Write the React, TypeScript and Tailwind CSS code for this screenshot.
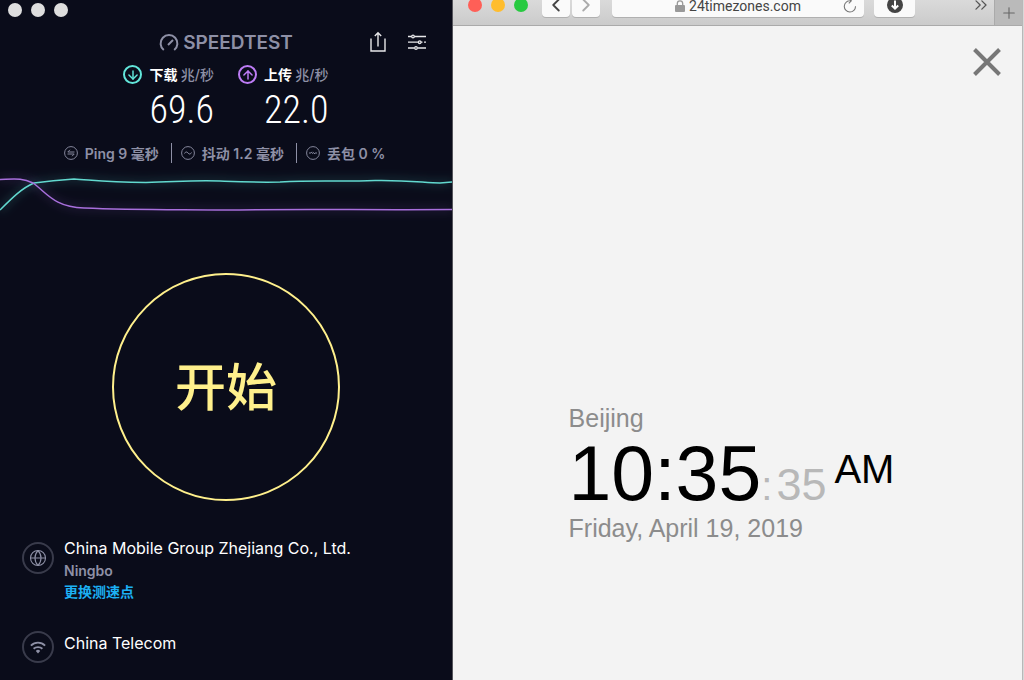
import { ArrowDown, ArrowUp, ChevronLeft, ChevronRight, ChevronsRight, Globe, Plus } from 'lucide-react'
import type { ReactNode } from 'react'

const latin = "font-['Inter','Noto_Sans_CJK_SC',sans-serif]"

function Gauge() {
  return (
    <svg viewBox="0 0 20 20" className="size-5" fill="none" stroke="#8e90a6" strokeWidth="2">
      <path d="M4.8 17A8.4 8.4 0 1 1 15.2 17" />
      <path d="M9 12l5-5" />
    </svg>
  )
}

function ShareIcon() {
  return (
    <svg viewBox="0 0 18 22" className="h-[22px] w-[18px]" fill="none" stroke="#e8e8ea" strokeWidth="1.4">
      <path d="M2 7.5V20h14V7.5M9 15.5V2M5.8 5L9 1.8 12.2 5" />
    </svg>
  )
}

function SlidersIcon() {
  return (
    <svg viewBox="0 0 20 18" className="h-[18px] w-5" fill="none" stroke="#e8e8ea" strokeWidth="1.3">
      <path d="M1 3.5h3.5M7.5 3.5H19M1 9.2h10M14 9.2h1.5M17 9.2h2M1 15h6.5M10.5 15H19" />
      <circle cx="6" cy="3.5" r="1.3" />
      <circle cx="12.7" cy="9.2" r="1.3" />
      <circle cx="9" cy="15" r="1.3" />
    </svg>
  )
}

function WifiIcon() {
  return (
    <svg viewBox="0 0 16 13" className="h-[13px] w-4" fill="none" stroke="#8e90a6" strokeWidth="1.9">
      <path d="M.9 4.6C5 .6 11 .6 15.1 4.6M3.6 7.8c2.5-2.3 6.3-2.3 8.8 0" />
      <path d="M5.8 9.9a3.2 3.2 0 0 1 4.4 0L8 12.5z" fill="#8e90a6" stroke="none" />
    </svg>
  )
}

function StatIcon({ d }: { d: string }) {
  return (
    <svg viewBox="0 0 14 14" className="size-3.5" fill="none" stroke="#85879c" strokeWidth="1">
      <circle cx="7" cy="7" r="6.4" />
      <path d={d} />
    </svg>
  )
}

function Speed({ label, value, icon, ring }: { label: string; value: string; icon: ReactNode; ring: string }) {
  return (
    <div className="flex gap-[7px]">
      <span className={`flex size-[19px] items-center justify-center rounded-full border-2 ${ring}`}>{icon}</span>
      <div>
        <div className="text-[14px] leading-5 font-bold whitespace-nowrap text-white">
          {label} <span className="font-medium text-[#8e90a6]">兆/秒</span>
        </div>
        <div className="font-['Roboto_Condensed','Liberation_Sans_Narrow',sans-serif] text-[38px] leading-[50px] font-light text-white">
          {value}
        </div>
      </div>
    </div>
  )
}

function Stat({ d, children }: { d: string; children: ReactNode }) {
  return (
    <li className="flex h-5 items-center gap-[7px] pr-3 pl-[9px] whitespace-nowrap">
      <StatIcon d={d} />
      {children}
    </li>
  )
}

function Graph() {
  const down = 'M0 45C12 33 22 23 34 18C48 16 58 15 74 14C92 15 104 17 146 17.5C176 17 190 15 220 16C245 17 255 17.5 280 17C320 15 340 17 375 15.5C410 15 425 18 440 18L452 17'
  const up = 'M0 14.5C16 14 22 13 33 18C47 28 54 42 84 43C130 45 170 44.5 226 45C280 44 380 45 452 44.5'
  return (
    <svg viewBox="0 0 452 60" preserveAspectRatio="none" className="block h-[60px] w-full" fill="none">
      <defs>
        <filter id="glow" x="-10%" y="-50%" width="120%" height="200%">
          <feGaussianBlur stdDeviation="4" />
        </filter>
      </defs>
      <path d={down} stroke="#5fe8dc" strokeOpacity=".14" strokeWidth="6" filter="url(#glow)" />
      <path d={up} stroke="#b477ee" strokeOpacity=".12" strokeWidth="6" filter="url(#glow)" />
      <path d={down} stroke="#62d9cf" strokeWidth="1.5" />
      <path d={up} stroke="#a86fdc" strokeWidth="1.5" />
    </svg>
  )
}

function SpeedtestWindow() {
  return (
    <section className={`flex flex-col border-r border-[#55555c] bg-[#0a0c1a] ${latin}`}>
      <div className="flex gap-[9px] px-2 pt-[3px]">
        <button aria-label="Close" className="size-3.5 rounded-full bg-[#dedede]" />
        <button aria-label="Minimize" className="size-3.5 rounded-full bg-[#dedede]" />
        <button aria-label="Zoom" className="size-3.5 rounded-full bg-[#dedede]" />
      </div>
      <header className="mt-3.5 grid grid-cols-[1fr_auto_1fr] items-center">
        <span />
        <h1 className="flex items-center gap-1 text-[19px] leading-6 font-semibold text-[#8e90a6]">
          <Gauge />
          SPEEDTEST
        </h1>
        <div className="flex items-center justify-end gap-5 pr-[25px] pb-0.5">
          <button aria-label="Share"><ShareIcon /></button>
          <button aria-label="Settings"><SlidersIcon /></button>
        </div>
      </header>
      <div className="mt-2.5 flex justify-center gap-6">
        <Speed label="下载" value="69.6" ring="border-[#62e6da] text-[#62e6da]" icon={<ArrowDown size={14} strokeWidth={2.5} className="shrink-0" />} />
        <Speed label="上传" value="22.0" ring="border-[#bd7cf5] text-[#bd7cf5]" icon={<ArrowUp size={14} strokeWidth={2.5} className="shrink-0" />} />
      </div>
      <ul className="mt-2 flex justify-center divide-x divide-[#8e90a6] text-[14px] font-semibold text-[#8e90a6]">
        <Stat d="M10.5 6H3.8L6 3.8M3.5 8H10.2L8 10.2">Ping 9 毫秒</Stat>
        <Stat d="M3.5 7.5C4.5 5.5 5.8 5.5 7 7S9.5 8.5 10.5 6.5">抖动 1.2 毫秒</Stat>
        <Stat d="M3 7h2l1-1.2M6.5 8l1-2M8 8l1-1h2">丢包 0 %</Stat>
      </ul>
      <div className="mt-0.5">
        <Graph />
      </div>
      <button className="mx-auto mt-12 size-[228px] rounded-full border-2 border-[#fff08c] pb-1.5 font-['Noto_Sans_CJK_SC',sans-serif] text-[51px] font-medium text-[#fff08c]">
        开始
      </button>
      <div className="mt-[35px] flex gap-2.5 px-[22px]">
        <span className="mt-1.5 flex size-8 items-center justify-center rounded-full border-2 border-[#393b4b] text-[#8e90a6]">
          <Globe size={18} strokeWidth={1.5} />
        </span>
        <div>
          <div className="text-base leading-6 text-white">China Mobile Group Zhejiang Co., Ltd.</div>
          <div className="text-[14px] leading-[22px] font-semibold text-[#8e90a6]">Ningbo</div>
          <a href="#" className="block text-[14px] leading-5 font-bold text-[#1cb0f4]">更换测速点</a>
        </div>
      </div>
      <div className="mt-[29px] flex gap-2.5 px-[22px]">
        <span className="flex size-8 items-center justify-center rounded-full border-2 border-[#393b4b]">
          <WifiIcon />
        </span>
        <div className="text-base leading-6 text-white">China Telecom</div>
      </div>
    </section>
  )
}

const tool = 'flex shrink-0 items-center justify-center rounded-[4px] bg-[#fafafa] shadow-[0_1px_0_#b0b0b0]'

function Toolbar() {
  return (
    <div className="flex h-[26px] border-b border-[#aaa] bg-linear-to-b from-[#dadada] to-[#cbcbcb]">
      <div className="flex flex-1 items-end pb-2 pl-[15px]">
        <div className="flex h-6 shrink-0 items-center gap-[9px]">
          <button aria-label="Close" className="size-3.5 rounded-full bg-[#ff5f57]" />
          <button aria-label="Minimize" className="size-3.5 rounded-full bg-[#ffbd2e]" />
          <button aria-label="Zoom" className="size-3.5 rounded-full bg-[#28ca41]" />
        </div>
        <button aria-label="Back" className={`${tool} ml-3.5 h-6 w-7 text-[#444]`}><ChevronLeft size={22} /></button>
        <button aria-label="Forward" className={`${tool} ml-0.5 h-6 w-7 text-[#aaa]`}><ChevronRight size={22} /></button>
        <div className={`${tool} relative ml-3 h-[22px] flex-1 gap-1 text-[#444]`}>
          <svg viewBox="0 0 10 12" className="h-3 w-2.5" fill="#999">
            <rect y="5" width="10" height="7" rx="1" />
            <path d="M2.3 6V3.5a2.7 2.7 0 0 1 5.4 0V6" fill="none" stroke="#999" strokeWidth="1.3" />
          </svg>
          <span className="font-['Roboto',sans-serif] text-[14px] leading-4">24timezones.com</span>
          <button aria-label="Reload" className="absolute right-1.5">
            <svg viewBox="0 0 16 16" className="size-4" fill="none" stroke="#777" strokeWidth="1.1">
              <path d="M13.5 8.2A5.6 5.6 0 1 1 8.5 2.8M6.5 .5L9.3 2.8 6.8 5.3" />
            </svg>
          </button>
        </div>
        <button aria-label="Downloads" className={`${tool} ml-2.5 h-6 w-[41px]`}>
          <svg viewBox="0 0 16 16" className="size-4">
            <circle cx="8" cy="8" r="8" fill="#444" />
            <path d="M8 3.5v8M4.8 8.5L8 11.7l3.2-3.2" fill="none" stroke="#fff" strokeWidth="2" />
          </svg>
        </button>
        <button aria-label="More" className="mr-[3px] ml-14 flex h-6 items-center text-[#555]"><ChevronsRight size={20} strokeWidth={1.5} /></button>
      </div>
      <button aria-label="New tab" className="flex w-7 items-center justify-center border-l border-[#aaa] bg-[#bababa] text-[#666]">
        <Plus size={18} strokeWidth={1.5} />
      </button>
    </div>
  )
}

function BrowserWindow() {
  return (
    <section className="flex flex-col border-r border-[#b8b8b8] bg-[#f3f3f3] font-['Liberation_Sans',sans-serif]">
      <Toolbar />
      <button aria-label="Close clock" className="mt-[22px] mr-[21px] self-end">
        <svg viewBox="0 0 28 28" className="size-7" stroke="#777" strokeWidth="4">
          <path d="M1.5 1.5l25 25M26.5 1.5l-25 25" />
        </svg>
      </button>
      <main className="mx-auto mt-[327px] pr-3">
        <div className="text-[25px] leading-[30px] text-[#8c8c8c]">Beijing</div>
        <div className="flex h-20 text-black">
          <span className="text-[77px] leading-20">10:35</span>
          <span className="flex items-baseline pt-5 text-[45px] leading-[64px] text-[#b8b8b8]">
            <span className="mr-1 text-[40px]">:</span>35
          </span>
          <span className="ml-2 text-[40px] leading-[72px]">AM</span>
        </div>
        <div className="text-[25px] leading-[30px] text-[#8c8c8c]">Friday, April 19, 2019</div>
      </main>
    </section>
  )
}

export default function App() {
  return (
    <div className="grid min-h-screen grid-cols-[453fr_570fr] bg-[#d8d8d8] pr-px">
      <SpeedtestWindow />
      <BrowserWindow />
    </div>
  )
}
